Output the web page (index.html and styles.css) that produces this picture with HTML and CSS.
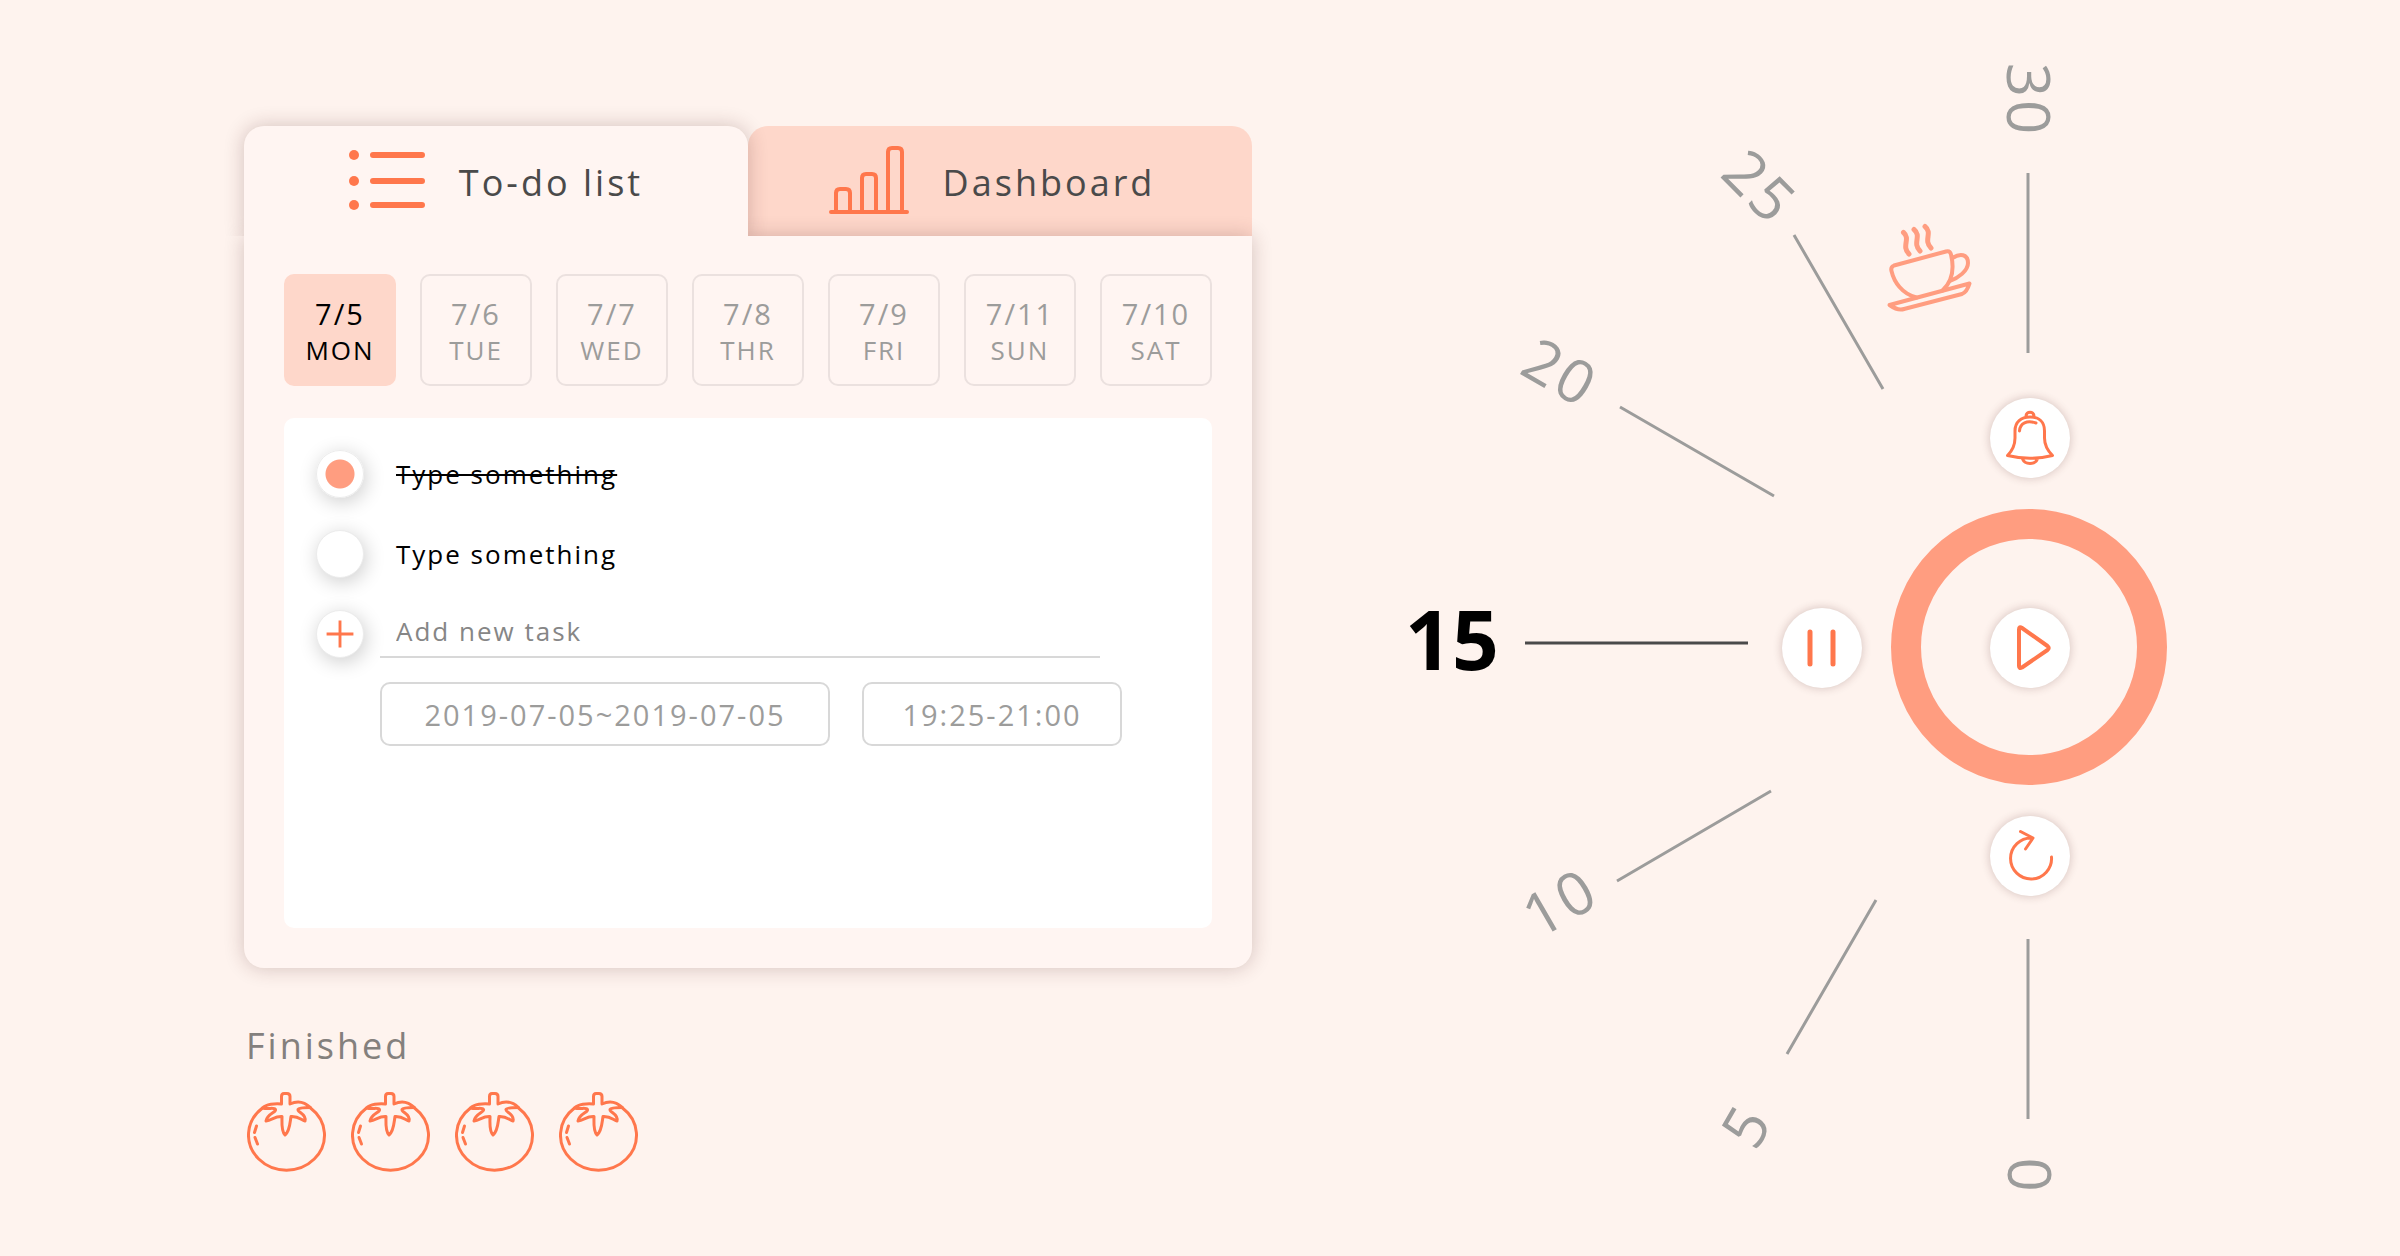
FILE: index.html
```html
<!DOCTYPE html>
<html lang="en">
<head>
<meta charset="utf-8">
<meta name="viewport" content="width=device-width, initial-scale=1">
<title>Pomodoro timer</title>
<link rel="stylesheet" href="styles.css">
</head>
<body>
<svg class="defs" aria-hidden="true">
  <symbol id="tomato" viewBox="0 0 80 80">
    <path d="M63.500 16A38 35 0 1 1 15.500 16"/>
    <path d="M34.500 12V4.500Q34.500 1.500 37 1.500H40Q43 1.500 43 4.500V12Q54 6.500 63.500 15.500C58 15.500 52 15.500 51 17.500C50 20 60 22 58 29C54 28 52 24 44 24.500C43 30 43 39 38 43C34 39 35 31 35 24.500C28 24 25 28 19 29C20 22 30 20 28.500 17.500C27 15 22 17.500 15.500 16C19 12.500 28 11 34.500 12Z"/>
    <path d="M9.500 34L7.500 40.500M8 45.500L10.500 52"/>
  </symbol>
</svg>
<main class="page">
  <div class="side">
    <section class="card">
      <div class="tabs" role="tablist">
        <button class="tab tab-active" type="button" role="tab" aria-selected="true">
          <svg class="tab-icon icon-list" viewBox="0 0 76 76" aria-hidden="true">
            <g class="fill"><circle cx="5" cy="12" r="5"/><circle cx="5" cy="38" r="5"/><circle cx="5" cy="62" r="5"/></g>
            <path class="bars" d="M24 12H73M24 38H73M24 62H73"/>
          </svg>
          <span>To-do list</span>
        </button>
        <button class="tab tab-dashboard" type="button" role="tab" aria-selected="false">
          <svg class="tab-icon" viewBox="0 0 80 80" aria-hidden="true">
            <path class="line" d="M2 71H78M7 70V52Q7 48 11 48H17Q21 48 21 52V70M33 70V37Q33 33 37 33H43Q47 33 47 37V70M59 70V11Q59 7 63 7H69Q73 7 73 11V70"/>
          </svg>
          <span>Dashboard</span>
        </button>
      </div>
      <div class="panel">
        <div class="days">
          <button class="day day-active" type="button"><span class="date">7/5</span><span>MON</span></button>
          <button class="day" type="button"><span class="date">7/6</span><span>TUE</span></button>
          <button class="day" type="button"><span class="date">7/7</span><span>WED</span></button>
          <button class="day" type="button"><span class="date">7/8</span><span>THR</span></button>
          <button class="day" type="button"><span class="date">7/9</span><span>FRI</span></button>
          <button class="day" type="button"><span class="date">7/11</span><span>SUN</span></button>
          <button class="day" type="button"><span class="date">7/10</span><span>SAT</span></button>
        </div>
        <div class="tasks">
          <label class="task"><input class="round check" type="checkbox" checked><span class="task-name">Type something</span></label>
          <label class="task"><input class="round check" type="checkbox"><span class="task-name">Type something</span></label>
          <form class="add">
            <div class="task">
              <button class="round plus" type="button" aria-label="Add task">
                <svg viewBox="0 0 48 48" aria-hidden="true"><path d="M24 10V38M10 24H38"/></svg>
              </button>
              <input class="new-task" type="text" placeholder="Add new task" aria-label="Add new task">
            </div>
            <div class="times">
              <input class="chip chip-date" type="text" value="2019-07-05~2019-07-05" aria-label="Dates">
              <input class="chip chip-time" type="text" value="19:25-21:00" aria-label="Time">
            </div>
          </form>
        </div>
      </div>
    </section>
    <section class="finished">
      <h2>Finished</h2>
      <div class="tomatoes">
        <svg class="tomato"><use href="#tomato"/></svg>
        <svg class="tomato"><use href="#tomato"/></svg>
        <svg class="tomato"><use href="#tomato"/></svg>
        <svg class="tomato"><use href="#tomato"/></svg>
      </div>
    </section>
  </div>

  <section class="dial" aria-label="Timer">
    <svg class="face" viewBox="0 0 768 1144">
      <g class="ticks">
        <path d="M624 117V297M390 179L479 333M216 351L370 440M213 825L367 735M383 998L472 844M624 883V1063"/>
        <path class="tick-now" d="M121 587H344"/>
      </g>
      <g class="numbers">
        <text transform="translate(625 42) rotate(90)" x="2" y="22">30</text>
        <text transform="translate(355 129) rotate(45)" x="2" y="22">25</text>
        <text transform="translate(155 315) rotate(30)" x="2" y="22">20</text>
        <text class="number-now" transform="translate(48 585)" y="29">15</text>
        <text transform="translate(154 847) rotate(-30)" x="2" y="22">10</text>
        <text transform="translate(341 1071) rotate(-60)" x="2" y="22">5</text>
        <text transform="translate(625 1119) rotate(-90)" x="2" y="22">0</text>
      </g>
      <circle class="ring" cx="625" cy="591" r="123"/>
      <g class="cup" transform="translate(476 144)">
        <path d="M14 65.500L66 51.500Q70 50.500 71 54.500C74 67 74 80 62.500 90.500M14 65.500Q10.500 67 11.500 71C14 82 22 94 36.500 97.500"/>
        <path d="M72.500 58C80 53 88 54 88 63C88 71 78 78 70 81"/>
        <path d="M9.500 105L89.500 83.500Q87 92 82 94L24 109Q18 111 9.500 105Z"/>
        <path class="steam" d="M23.500 32.500C31 39 21 46 29 54M34 29.500C42 36 32 43 40 51M45 26.500C53 33 43 40 51 48"/>
      </g>
    </svg>
    <button class="control control-bell" type="button" aria-label="Alarm">
      <svg viewBox="0 0 80 80"><path d="M17.500 57.500C24 51 25 46 25 40V33C25 24 31 19 40 19S54.500 24 54.500 33V40C54.500 46 56 51 62.500 57.500Q40 63 17.500 57.500ZM36 18C36 13 44 13 44 18M32.500 61C35 67 45 67 47.500 61M29.500 33C30 25 37 22 46 25"/></svg>
    </button>
    <button class="control control-pause" type="button" aria-label="Pause">
      <svg viewBox="0 0 80 80"><path class="thick" d="M28 24V56M51 24V56"/></svg>
    </button>
    <button class="control control-play" type="button" aria-label="Play">
      <svg viewBox="0 0 80 80"><path class="mid" d="M29 21.500Q29 18 32 20L57.500 38Q60 40 57.500 42L32 59.500Q29 61 29 58Z"/></svg>
    </button>
    <button class="control control-reset" type="button" aria-label="Restart">
      <svg viewBox="0 0 80 80"><path d="M61.500 41A20.500 20.500 0 1 1 42 22M30.500 15.500L43 22L35.500 33"/></svg>
    </button>
  </section>
</main>
</body>
</html>
```
FILE: styles.css
```css
:root {
  --bg: #fef3ee;
  --panel: #fff5f2;
  --peach: #fed7ca;
  --salmon: #ff9d80;
  --orange: #ff774c;
  --grey: #9c9c9b;
  --ink: #4a4a4a;
}

* { box-sizing: border-box; }

body {
  margin: 0;
  background: var(--bg);
  font-family: "Open Sans", "Noto Sans", sans-serif;
  font-size: 26px;
  line-height: 36px;
  letter-spacing: 2px;
}

button, input {
  font: inherit;
  letter-spacing: inherit;
  color: inherit;
  margin: 0;
  padding: 0;
  border: 0;
  background: none;
}

button { cursor: pointer; }
svg { display: block; fill: none; stroke-linecap: round; stroke-linejoin: round; }
.defs { position: absolute; width: 0; height: 0; }

.page {
  display: grid;
  grid-template-columns: minmax(0, 21fr) minmax(0, 16fr);
  column-gap: 152px;
  align-items: start;
  padding: 56px 228px 56px 244px;
}

.side { padding-top: 70px; }

/* Tabs */
.tabs { display: grid; grid-template-columns: 1fr 1fr; }

.tab {
  display: flex;
  align-items: center;
  justify-content: center;
  gap: 34px;
  height: 110px;
  border-radius: 20px 20px 0 0;
  background: var(--peach);
  color: var(--ink);
  font-size: 36px;
  letter-spacing: 3px;
}

.tab span { padding-top: 4px; }
.tab-dashboard { padding-right: 16px; }

.tab-active {
  position: relative;
  z-index: 2;
  background: var(--panel);
  box-shadow: 0 0 20px rgba(74, 30, 30, 0.24);
  clip-path: inset(-30px -30px 0 -30px);
}

.tab-icon { width: 80px; height: 80px; stroke: var(--orange); }
.icon-list { width: 76px; height: 76px; }
.tab-icon .fill { fill: var(--orange); stroke: none; }
.tab-icon .bars { stroke-width: 6px; }
.tab-icon .line { stroke-width: 4px; }

.panel {
  position: relative;
  z-index: 1;
  padding: 38px 40px 40px;
  border-radius: 0 0 20px 20px;
  background: var(--panel);
  box-shadow: 0 0 20px rgba(74, 30, 30, 0.24);
}

/* Day picker */
.days { display: grid; grid-template-columns: repeat(7, 1fr); gap: 24px; }

.day {
  display: flex;
  flex-direction: column;
  align-items: center;
  justify-content: center;
  height: 112px;
  padding-top: 4px;
  border: 2px solid #ebe1df;
  border-radius: 10px;
  color: var(--grey);
}

.date { font-size: 29px; }
.day-active { border-color: var(--peach); background: var(--peach); color: #000; }

/* Task list */
.tasks {
  display: flex;
  flex-direction: column;
  gap: 32px;
  min-height: 510px;
  margin-top: 32px;
  padding: 32px;
  border-radius: 10px;
  background: #fff;
}

.task { display: flex; align-items: center; gap: 16px; height: 48px; color: #000; }
.task-name { margin-left: 16px; }
.check:checked + .task-name { text-decoration: line-through; text-decoration-thickness: 2px; }

.round {
  flex: none;
  width: 48px;
  height: 48px;
  border: 1px solid #ececec;
  border-radius: 50%;
  background: #fff;
  box-shadow: 2px 4px 20px rgba(0, 0, 0, 0.2);
}

.check { appearance: none; }
.check:checked { background: radial-gradient(circle, var(--salmon) 14px, #fff 15px); }
.plus svg { width: 46px; height: 46px; stroke: var(--orange); stroke-width: 3px; stroke-linecap: butt; }

.new-task {
  flex: 1;
  min-width: 0;
  height: 48px;
  margin-right: 80px;
  padding: 0 0 4px 16px;
  border-bottom: 2px solid #d8d8d8;
}

.new-task::placeholder { color: #868686; opacity: 1; }

.times { display: flex; gap: 32px; margin: 24px 0 0 64px; }

.chip {
  height: 64px;
  border: 2px solid #d8d8d8;
  border-radius: 10px;
  color: var(--grey);
  font-size: 29px;
  text-align: center;
}

.chip-date { width: 450px; }
.chip-time { width: 260px; }

/* Finished */
.finished h2 {
  margin: 54px 0 0 2px;
  color: #84807d;
  font-size: 36px;
  font-weight: 400;
  line-height: 48px;
  letter-spacing: 3px;
}

.tomatoes { display: flex; gap: 24px; margin: 22px 0 0 3px; }
.tomato { width: 80px; height: 80px; stroke: var(--orange); stroke-width: 3px; }

/* Timer dial */
.dial { position: relative; }
.face { width: 100%; height: auto; overflow: visible; }
.ticks { stroke: var(--grey); stroke-width: 3px; stroke-linecap: butt; }
.tick-now { stroke: var(--ink); }

.numbers {
  fill: var(--grey);
  font-size: 60px;
  letter-spacing: 3px;
  text-anchor: middle;
}

.numbers .number-now { fill: #000; font-size: 82px; font-weight: 700; letter-spacing: 0; }
.ring { stroke: var(--salmon); stroke-width: 30px; }
.cup { stroke: var(--salmon); stroke-width: 4px; }
.steam { stroke-width: 5px; }

.control {
  position: absolute;
  width: 80px;
  height: 80px;
  transform: translate(-50%, -50%);
  border-radius: 50%;
  background: #fff;
  box-shadow: 0 0 10px rgba(74, 30, 30, 0.24);
}

.control svg { width: 80px; height: 80px; stroke: var(--orange); stroke-width: 3px; }
.control .mid { stroke-width: 4px; }
.control .thick { stroke-width: 5px; }
.control-bell { left: calc(100% * 626 / 768); top: calc(100% * 382 / 1144); }
.control-pause { left: calc(100% * 418 / 768); top: calc(100% * 592 / 1144); }
.control-play { left: calc(100% * 626 / 768); top: calc(100% * 592 / 1144); }
.control-reset { left: calc(100% * 626 / 768); top: calc(100% * 800 / 1144); }
```
